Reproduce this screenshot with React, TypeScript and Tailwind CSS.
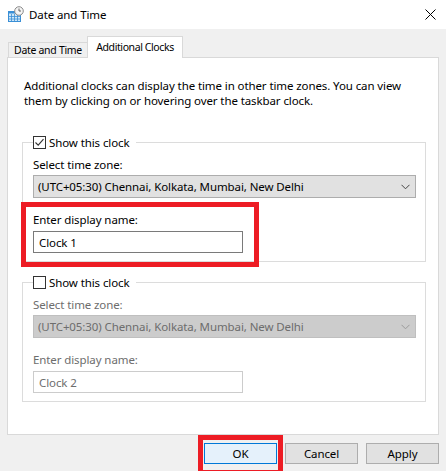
import React from "react";

function Check({ checked }: { checked: boolean }) {
  return (
    <span className="inline-flex w-[13px] h-[13px] border border-[#333333] bg-white items-center justify-center shrink-0">
      {checked && (
        <svg width="11" height="11" viewBox="0 0 11 11">
          <path d="M1.5 5.5 L4.2 8.2 L9.5 2.2" fill="none" stroke="#333333" strokeWidth="1.1" />
        </svg>
      )}
    </span>
  );
}

function Chevron({ color }: { color: string }) {
  return (
    <svg width="9" height="6" viewBox="0 0 9 6">
      <path d="M0.5 0.8 L4.5 4.8 L8.5 0.8" fill="none" stroke={color} strokeWidth="1" />
    </svg>
  );
}

function ClockGroup({
  enabled,
  name,
}: {
  enabled: boolean;
  name: string;
}) {
  const labelColor = enabled ? "text-black" : "text-[#6d6d6d]";
  return (
    <fieldset className="w-[404px] ml-[14px] border border-[#dcdcdc] pl-[10px] pr-[9px] pb-[8px]">
      <legend className="flex items-center h-[15px] pr-[6px]">
        <Check checked={enabled} />
        <span className="ml-[3px] leading-[15px] text-black">Show this clock</span>
      </legend>
      <div className={`mt-[7px] leading-[15px] ${labelColor}`}>Select time zone:</div>
      <div
        className={`mt-[3px] h-[23px] flex items-center justify-between pl-[4px] pr-[5px] border ${
          enabled ? "bg-[#e1e1e1] border-[#adadad] text-black" : "bg-[#cccccc] border-[#bfbfbf] text-[#6d6d6d]"
        }`}
      >
        <span className="leading-[15px]">(UTC+05:30) Chennai, Kolkata, Mumbai, New Delhi</span>
        <Chevron color={enabled ? "#444444" : "#9a9a9a"} />
      </div>
      <div className={`mt-[14px] leading-[15px] ${labelColor}`}>Enter display name:</div>
      <div
        className={`mt-[4px] w-[210px] h-[22px] flex items-center pl-[5px] border bg-white ${
          enabled ? "border-[#7a7a7a] text-black" : "border-[#cccccc] text-[#6d6d6d]"
        }`}
      >
        <span className="leading-[15px]">{name}</span>
      </div>
    </fieldset>
  );
}

function Btn({ label, primary }: { label: string; primary?: boolean }) {
  return (
    <div
      className={`w-[73px] h-[21px] flex items-center justify-center border ${
        primary ? "bg-[#e5f1fb] border-[#0078d7]" : "bg-[#e1e1e1] border-[#adadad]"
      }`}
    >
      <span className="leading-[15px]">{label}</span>
    </div>
  );
}

export default function App() {
  return (
    <div className="relative w-[446px] h-[471px] overflow-hidden bg-[#f0f0f0] text-[11.5px] tracking-[-0.1px] text-black font-['Segoe_UI','Noto_Sans',sans-serif]">
      {/* Title bar */}
      <div className="h-[29px] bg-white flex items-center pl-[8px] pr-[10px]">
        <svg width="16" height="17" viewBox="0 0 16 17" className="mt-[-1px]">
          <rect x="0.5" y="5.5" width="12" height="10" fill="#cfe6f7" stroke="#3a8fd6" />
          <rect x="0.5" y="5.5" width="12" height="2" fill="#3a8fd6" />
          <path d="M3.5 8 V15 M6.5 8 V15 M9.5 8 V15 M1 10.5 H12 M1 13 H12" stroke="#3a8fd6" strokeWidth="0.8" />
          <circle cx="11" cy="5" r="4.3" fill="#f4f4f4" stroke="#8a8a8a" />
          <path d="M11 2.5 V5 H13" fill="none" stroke="#555555" strokeWidth="0.9" />
        </svg>
        <span className="ml-[5px] leading-[15px]">Date and Time</span>
        <div className="flex-1" />
        <svg width="11" height="11" viewBox="0 0 11 11" className="mt-[-1px]">
          <path d="M0.5 0.5 L10.5 10.5 M10.5 0.5 L0.5 10.5" stroke="#000000" strokeWidth="1" />
        </svg>
      </div>

      {/* Tabs */}
      <div className="flex items-end pl-[8px] pt-[7px] -mb-px relative z-10 text-[10.5px] tracking-[-0.3px]">
        <div className="w-[79px] h-[15px] mb-px flex items-center justify-center border-l border-t border-[#d9d9d9] bg-[#f0f0f0]">
          <span className="leading-[15px] mt-[1px] whitespace-nowrap">Date and Time</span>
        </div>
        <div className="w-[96px] h-[22px] flex items-start justify-center pt-[3px] border-l border-t border-r border-[#d9d9d9] bg-white">
          <span className="leading-[15px] whitespace-nowrap tracking-[-0.4px]">Additional Clocks</span>
        </div>
      </div>

      {/* Panel */}
      <div className="ml-[7px] w-[432px] h-[378px] bg-white border border-[#d9d9d9] pt-[20px]">
        <p className="px-[16px] leading-[15px] whitespace-nowrap">
          Additional clocks can display the time in other time zones. You can view
          <br />
          them by clicking on or hovering over the taskbar clock.
        </p>
        <div className="mt-[27px]">
          <ClockGroup enabled={true} name="Clock 1" />
        </div>
        <div className="mt-[13px]">
          <ClockGroup enabled={false} name="Clock 2" />
        </div>
      </div>

      {/* Buttons */}
      <div className="mt-[8px] flex justify-end gap-[8px] pr-[7px]">
        <Btn label="OK" primary />
        <Btn label="Cancel" />
        <Btn label="Apply" />
      </div>

      {/* Red annotation boxes */}
      <div className="absolute left-[21px] top-[202px] w-[238px] h-[65px] border-[5px] border-[#ed1c24]" />
      <div className="absolute left-[198px] top-[435px] w-[85px] h-[40px] border-[5px] border-[#ed1c24]" />
    </div>
  );
}
